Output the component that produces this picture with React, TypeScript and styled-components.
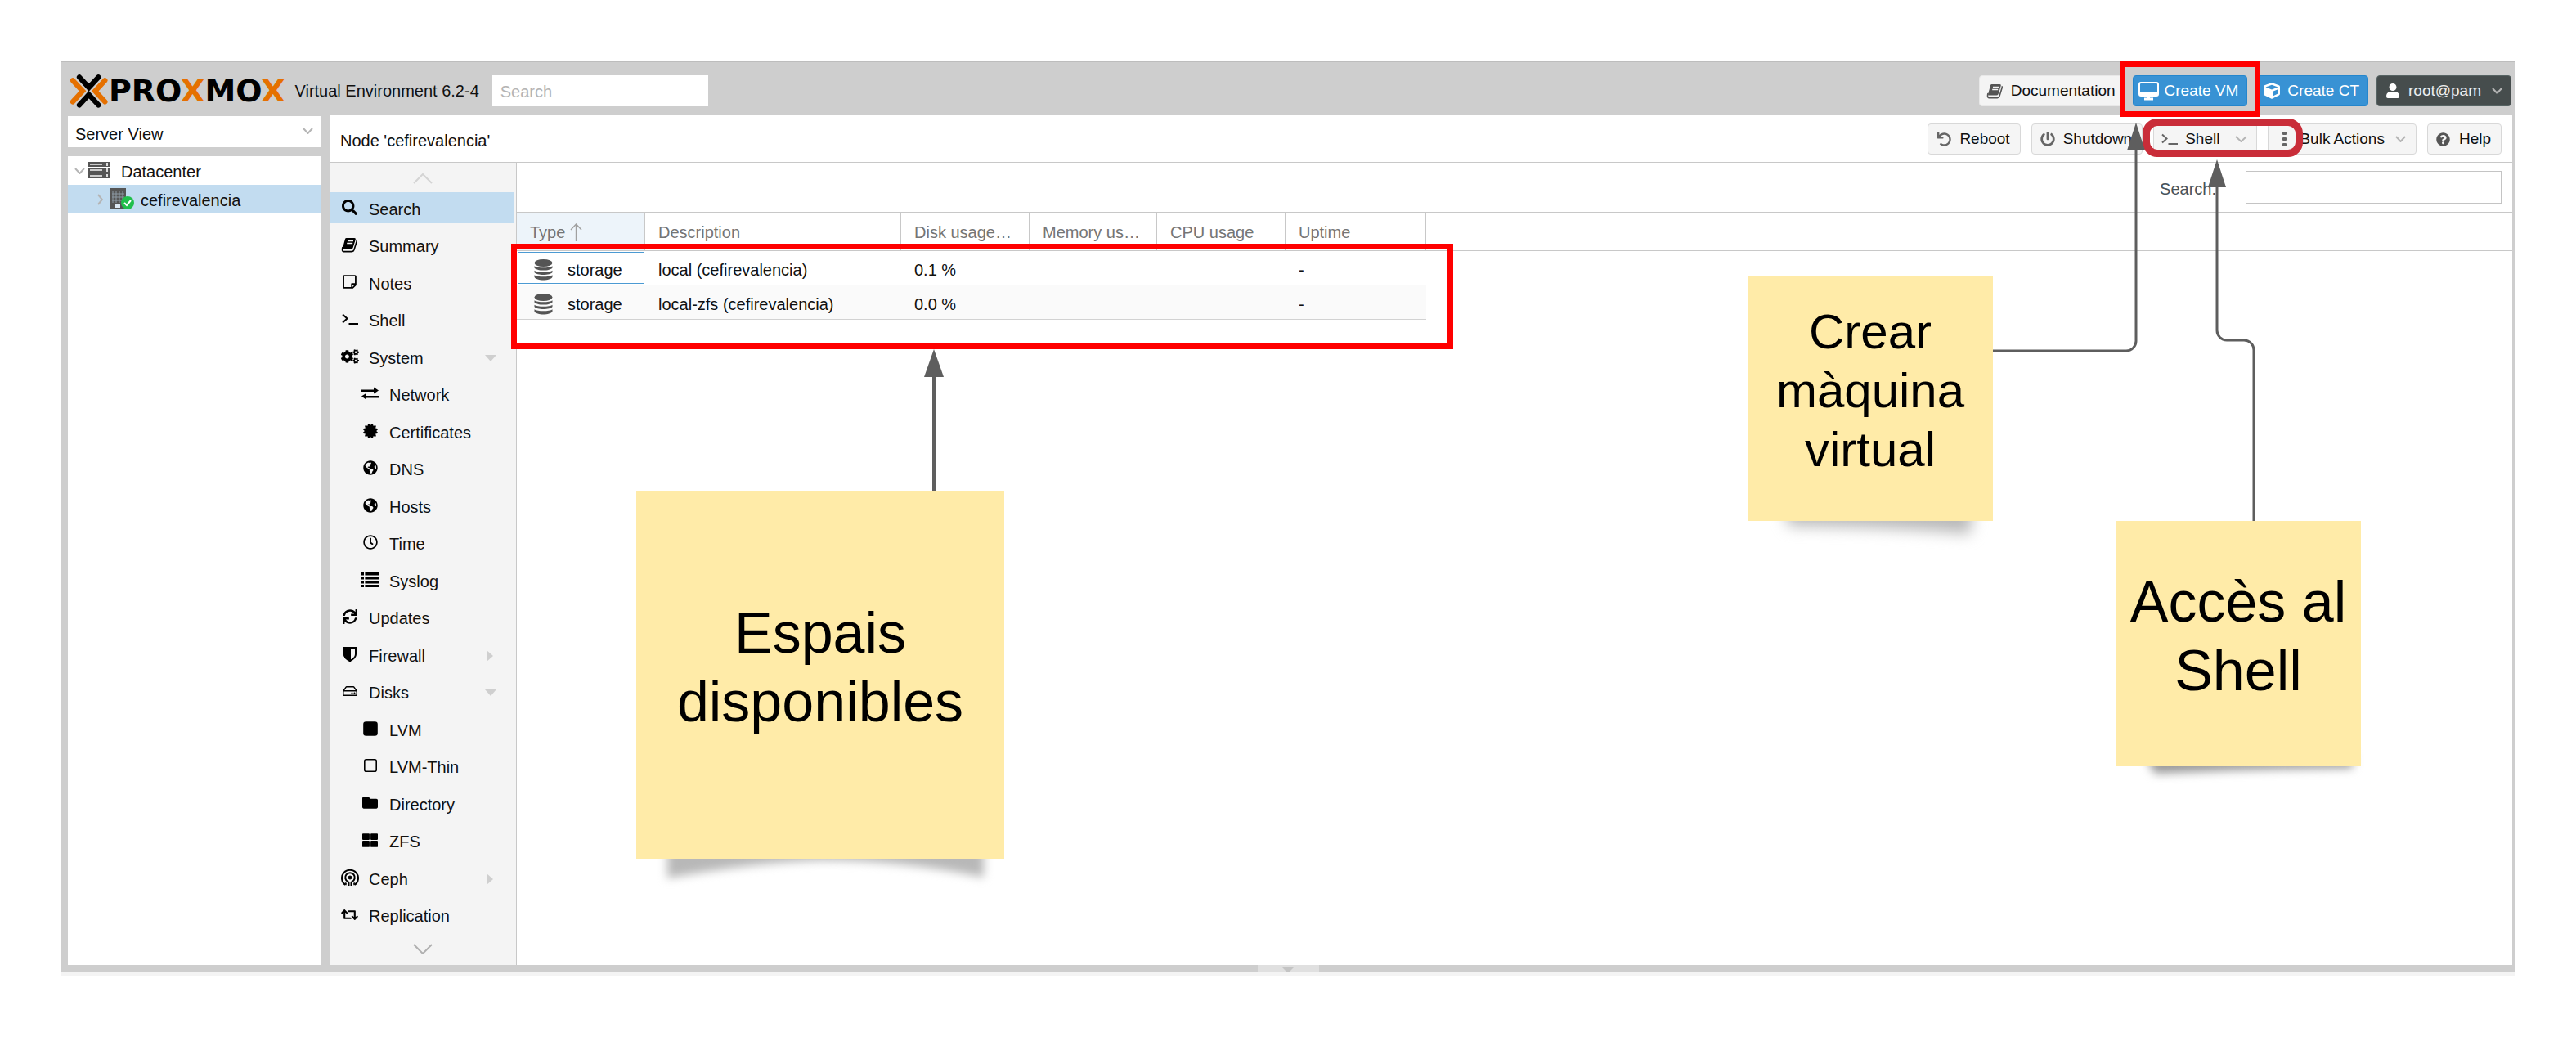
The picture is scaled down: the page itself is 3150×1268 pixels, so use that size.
import React from "react";
import styled, { createGlobalStyle, css } from "styled-components";
import {
  FaCertificate,
  FaCogs,
  FaCube,
  FaFolder,
  FaGlobeAmericas,
  FaPowerOff,
  FaQuestionCircle,
  FaRegClock,
  FaRegHdd,
  FaRegStickyNote,
  FaRetweet,
  FaSearch,
  FaSync,
  FaThLarge,
  FaUndo,
  FaUser,
} from "react-icons/fa";

const frame = "#cecece";
const line = "#c8c8c8";
const selected = "#c2dcf0";
const connector = "#5e5e5e";

const GlobalStyle = createGlobalStyle`
  *, *::before, *::after { box-sizing: border-box; }
  body {
    margin: 0;
    background: #fff;
    color: #111;
    font: 20px/24px "Liberation Sans", Arial, sans-serif;
  }
  button, input, select { font: inherit; color: inherit; margin: 0; }
  svg { display: block; flex: none; }
`;

/* ---------- frame ---------- */

const Page = styled.div`
  display: flex;
  min-height: 100vh;
  padding: 75px;
`;

const Shell = styled.div`
  position: relative;
  display: flex;
  flex: 1;
  flex-direction: column;
  min-width: 0;
  background: ${frame};
`;

const TopBar = styled.header`
  display: flex;
  align-items: center;
  height: 66px;
  padding: 4px 4px 0 9px;
  border-top: 1px solid #bdbdbd;
`;

const Logo = styled.a`
  display: flex;
  align-items: center;
  gap: 1px;
  color: #000;
  text-decoration: none;
`;

const Wordmark = styled.span`
  font: bold 38px/40px "DejaVu Sans", sans-serif;
`;

const Accent = styled.span`
  color: #e57000;
`;

const Version = styled.span`
  margin: 0 16px 0 12px;
`;

const GlobalSearch = styled.input`
  width: 264px;
  height: 38px;
  padding: 4px 10px 0;
  border: 0;
  background: #fff;
  &::placeholder { color: #b4b4b4; opacity: 1; }
`;

const TopActions = styled.div`
  display: flex;
  gap: 10px;
  margin-left: auto;
`;

const Workspace = styled.div`
  display: flex;
  flex: 1;
  gap: 10px;
  min-height: 0;
  padding: 0 3px 0 8px;
`;

const Splitter = styled.div`
  display: flex;
  justify-content: center;
  height: 8px;
`;

const SplitterHandle = styled.button`
  display: flex;
  justify-content: center;
  width: 75px;
  padding: 3px 0 0;
  border: 0;
  background: #e0e0e0;
`;

const StatusStrip = styled.div`
  height: 5px;
  background: #f4f4f4;
`;

/* ---------- buttons ---------- */

type Tone = "plain" | "tool" | "primary" | "dark";

const tones = {
  plain: css`background: #f4f4f4; border-color: #e8e8e8;`,
  tool: css`padding-right: 12px; background: #f5f5f5; border-color: #d8d8d8;`,
  primary: css`background: #3892d4; border-color: #2486cd; color: #fff;`,
  dark: css`background: #464d4d; border-color: #576464; color: #eee;`,
};

const Button = styled.button<{ $tone: Tone }>`
  display: flex;
  align-items: center;
  height: 38px;
  padding: 1px 10px 0 7px;
  border: 1px solid;
  border-radius: 4px;
  font-size: 19px;
  white-space: nowrap;
  ${(p) => tones[p.$tone]}
`;

const IconSlot = styled.span<{ $color?: string }>`
  display: flex;
  justify-content: center;
  width: 24px;
  margin-right: 7px;
  color: ${(p) => p.$color ?? "inherit"};
`;

const Caret = styled.span`
  display: flex;
  margin-left: 13px;
  color: #b5b5b5;
`;

const SplitButton = styled.div`
  display: flex;
  & > :first-child { padding-right: 10px; border-right-color: #d0d0d0; border-radius: 4px 0 0 4px; }
  & > :last-child { padding: 0 11px 0 8px; border-left: 0; border-radius: 0 4px 4px 0; color: #b5b5b5; }
`;

/* ---------- resource tree ---------- */

const Side = styled.aside`
  display: flex;
  flex-direction: column;
  gap: 11px;
  width: 310px;
  padding-top: 1px;
`;

const ViewPicker = styled.div`
  display: grid;
  align-items: center;
  height: 38px;
  background: #fff;
  color: #b5b5b5;
  & > * { grid-area: 1 / 1; }
  & > svg { justify-self: end; margin: 0 10px 2px 0; pointer-events: none; }
`;

const ViewSelect = styled.select`
  width: 100%;
  height: 100%;
  padding: 5px 9px 0;
  border: 0;
  appearance: none;
  background: transparent;
  color: #111;
`;

const Tree = styled.ul`
  flex: 1;
  margin: 0;
  padding: 0;
  background: #fff;
  list-style: none;
`;

const TreeRow = styled.li<{ $depth: number; $active?: boolean }>`
  display: flex;
  align-items: center;
  gap: ${(p) => (p.$depth ? 8 : 4)}px;
  height: 35px;
  padding-left: ${(p) => 8 + p.$depth * 28}px;
  background: ${(p) => (p.$active ? selected : "transparent")};
  color: #b5b5b5;
`;

const TreeLabel = styled.span<{ $indent?: boolean }>`
  padding: 3px 0 0 ${(p) => (p.$indent ? 10 : 0)}px;
  color: #111;
`;

/* ---------- node panel ---------- */

const Panel = styled.main`
  display: flex;
  flex: 1;
  flex-direction: column;
  min-width: 0;
  background: #fff;
`;

const PanelHead = styled.div`
  display: flex;
  align-items: center;
  gap: 13px;
  height: 58px;
  padding: 0 13px;
  border-bottom: 1px solid ${line};
`;

const PanelTitle = styled.h1`
  margin: 0 auto 0 0;
  padding-top: 4px;
  font-size: 20px;
  font-weight: normal;
`;

const PanelBody = styled.div`
  display: flex;
  flex: 1;
  min-height: 0;
`;

const Nav = styled.nav`
  display: flex;
  flex-direction: column;
  width: 229px;
  border-right: 1px solid ${line};
  background: #f4f4f4;
`;

const NavScroll = styled.button<{ $end?: boolean }>`
  display: flex;
  align-items: center;
  justify-content: center;
  height: ${(p) => (p.$end ? 39 : 32)}px;
  padding: ${(p) => (p.$end ? "0" : "7px 0 0")};
  border: 0;
  background: none;
  color: ${(p) => (p.$end ? "#b0b0b0" : "#d4d4d4")};
`;

const NavList = styled.ul`
  display: flex;
  flex: 1;
  flex-direction: column;
  margin: 0;
  padding: 0;
  list-style: none;
`;

const NavItem = styled.li`
  display: flex;
  flex: 1;
  align-items: center;
`;

const NavLink = styled.a<{ $depth: number; $active?: boolean }>`
  display: flex;
  align-items: center;
  width: 226px;
  height: 38px;
  padding: 0 21px 0 ${(p) => 12 + p.$depth * 25}px;
  background: ${(p) => (p.$active ? selected : "transparent")};
  color: #111;
  text-decoration: none;
`;

const NavLabel = styled.span`
  flex: 1;
  padding: 4px 0 0 11px;
`;

const NavIcon = styled.span`
  display: flex;
  justify-content: center;
  width: 25px;
  color: #000;
`;

const NavArrow = styled.span`
  display: flex;
  justify-content: center;
  width: 16px;
  padding-top: 4px;
  color: #cfcfcf;
`;

const Content = styled.section`
  flex: 1;
  min-width: 0;
`;

const FilterBar = styled.form`
  display: flex;
  align-items: center;
  justify-content: flex-end;
  gap: 36px;
  height: 61px;
  padding: 0 13px;
  border-bottom: 1px solid ${line};
`;

const FilterLabel = styled.label`
  padding-top: 4px;
  color: #47535b;
`;

const FilterInput = styled.input`
  width: 313px;
  height: 40px;
  padding: 0 10px;
  border: 1px solid #c4c4c4;
  background: #fff;
`;

/* ---------- resource grid ---------- */

const Grid = styled.table`
  width: 100%;
  border-collapse: separate;
  border-spacing: 0;
  table-layout: fixed;
`;

const Col = styled.col<{ $w?: number }>`
  width: ${(p) => (p.$w ? `${p.$w}px` : "auto")};
`;

const HeadCell = styled.th<{ $sorted?: boolean }>`
  height: 47px;
  padding: 2px 16px 0;
  overflow: hidden;
  border-right: 1px solid ${line};
  border-bottom: 1px solid ${line};
  background: ${(p) => (p.$sorted ? "#edf4fa" : "#fff")};
  color: #757575;
  font-weight: normal;
  text-align: left;
  white-space: nowrap;
  &:last-child { border-right: 0; }
`;

const HeadLabel = styled.span`
  display: flex;
  align-items: center;
  gap: 6px;
  & > svg { color: #a0a0a0; }
`;

const Cell = styled.td<{ $focus?: boolean; $stripe?: boolean }>`
  height: 42px;
  padding: 4px 16px 0;
  border-bottom: 1px solid #d2d2d2;
  background: ${(p) => (p.$stripe ? "#fafafa" : "#fff")};
  box-shadow: ${(p) => (p.$focus ? "inset 0 0 0 1px #fff, inset 0 0 0 2px #4b9ad3" : "none")};
  white-space: nowrap;
  &:last-child { border-bottom: 0; background: none; }
`;

const Kind = styled.span`
  display: flex;
  align-items: center;
  gap: 18px;
  padding-left: 5px;
  & > svg { color: #555; }
`;

/* ---------- annotations over the page ---------- */

const LeftNotes = styled.div`
  position: absolute;
  top: 0;
  left: 0;
  width: 1740px;
  height: 1118px;
  pointer-events: none;
`;

const RightNotes = styled(LeftNotes)`
  right: 0;
  left: auto;
  width: 975px;
`;

const Spot = styled.div<{ $x: number; $y: number; $w: number; $h: number }>`
  position: absolute;
  top: ${(p) => p.$y}px;
  left: ${(p) => p.$x}px;
  width: ${(p) => p.$w}px;
  height: ${(p) => p.$h}px;
`;

const RedFrame = styled(Spot)`
  border: 7px solid #f00;
`;

const Ring = styled(Spot)`
  border: 9px solid #c92d39;
  border-radius: 18px;
`;

const Sticky = styled(Spot)<{ $size: number; $lh: number }>`
  & > p {
    position: relative;
    display: flex;
    align-items: center;
    justify-content: center;
    height: 100%;
    margin: 0;
    padding-bottom: 18px;
    background: #ffeba8;
    color: #000;
    font-size: ${(p) => p.$size}px;
    line-height: ${(p) => p.$lh}px;
    text-align: center;
  }
`;

const Drawing = styled.svg`
  position: absolute;
  inset: 0;
  overflow: visible;
`;

/* ---------- icons ---------- */

const Mark = () => (
  <svg width="48" height="42" viewBox="-3 0 144 126" fill="none" strokeWidth="19" strokeLinecap="round" strokeLinejoin="miter">
    <path d="M12 25 L48 64 L12 103 M130 25 L94 64 L130 103" stroke="#e57000" />
    <path d="M36 13 L71 51 L106 13 M36 115 L71 77 L106 115" stroke="#000" />
  </svg>
);

const Chevron = ({ w = 13, h = 8, dir = "down" }: { w?: number; h?: number; dir?: "down" | "up" | "right" }) => {
  const d = { down: `M1 1 L${w / 2} ${h - 1} L${w - 1} 1`, up: `M1 ${h - 1} L${w / 2} 1 L${w - 1} ${h - 1}`, right: `M1 1 L${w - 1} ${h / 2} L1 ${h - 1}` };
  return (
    <svg width={w} height={h} fill="none" stroke="currentColor" strokeWidth="2">
      <path d={d[dir]} />
    </svg>
  );
};

const Terminal = ({ size = 20 }: { size?: number }) => (
  <svg width={size} height={size} viewBox="0 0 20 20" fill="none" stroke="currentColor" strokeWidth="2">
    <path d="M1 4.5 L6.5 9.5 L1 14.5 M8.5 16 H20" />
  </svg>
);

const Book = () => (
  <svg width="21" height="19" viewBox="0 0 21 19">
    <path d="M6.5 1 H16.5 Q18.3 1 17.8 2.8 L14.6 13 Q14 14.5 12.3 14.5 H3 Q1.6 14.5 2.2 12.6 L5 2.3 Q5.4 1 6.5 1 Z" fill="currentColor" />
    <path d="M8 4.5 H15 M7.2 7.5 H14.2" stroke="#f4f4f4" strokeWidth="1.3" />
    <path d="M2 12 Q.6 17.4 3 17.6 H13.4 Q15.3 17.6 16 15.6 L19.2 5 Q19.6 3.8 18.6 3.4" fill="none" stroke="currentColor" strokeWidth="1.6" />
  </svg>
);

const Desktop = () => (
  <svg width="25" height="24" viewBox="0 0 25 24" fill="none" stroke="currentColor">
    <rect x="1" y="2" width="23" height="16" rx="2" strokeWidth="2" />
    <path d="M1 16 H24" strokeWidth="4" />
    <path d="M12.5 18 V22 M7 22 H18" strokeWidth="3" />
  </svg>
);

const Exchange = () => (
  <svg width="21" height="16" viewBox="0 0 21 16" fill="currentColor">
    <path d="M0 3.5 H15 V0.5 L21 4.6 L15 8.5 V6 H0 Z M21 13.5 H6 V15.8 L0 11.6 L6 7.8 V11 H21 Z" />
  </svg>
);

const ThList = () => (
  <svg width="22" height="18" viewBox="0 0 22 18" fill="currentColor">
    {[0, 5, 10, 15].map((y) => (
      <path key={y} d={`M0 ${y} h3 v3.4 h-3 z M4.4 ${y} h17.6 v3.4 h-17.6 z`} />
    ))}
  </svg>
);

const HalfShield = () => (
  <svg width="16" height="18" viewBox="0 0 16 18" fill="none" stroke="currentColor" strokeWidth="2">
    <path d="M1 1 H15 V9 C15 13 11 15.5 8 17 C5 15.5 1 13 1 9 Z" />
    <path d="M1 1 H8 V17 C5 15.5 1 13 1 9 Z" fill="currentColor" />
  </svg>
);

const Square = ({ filled }: { filled?: boolean }) => (
  <svg width="18" height="18" viewBox="0 0 18 18" stroke="currentColor" strokeWidth="1.6">
    {filled ? <rect x="1" y="1" width="16" height="16" rx="2.5" fill="currentColor" /> : <rect x="1.8" y="1.8" width="14.4" height="14.4" rx="2" fill="none" />}
  </svg>
);

const Ceph = () => (
  <svg width="22" height="22" viewBox="0 0 22 22" fill="none" stroke="currentColor" strokeWidth="2">
    <circle cx="11" cy="11" r="2" fill="currentColor" strokeWidth="1" />
    <path d="M5.5 20 A10 10 0 1 1 16.5 20" />
    <path d="M9.5 21 V17.5 Q9.5 16.5 8.5 16.2 A5.8 5.8 0 1 1 13.5 16.2 Q12.5 16.5 12.5 17.5 V21" />
    <path d="M5.8 20 Q6.6 18.6 5.4 17.4 M16.2 20 Q15.4 18.6 16.6 17.4" strokeWidth="1.6" />
  </svg>
);

const Dots = () => (
  <svg width="5" height="18" viewBox="0 0 5 18" fill="currentColor">
    <rect width="5" height="4" rx="1" />
    <rect y="7" width="5" height="4" rx="1" />
    <rect y="14" width="5" height="4" rx="1" />
  </svg>
);

const Disks = () => (
  <svg width="23" height="26" viewBox="0 0 23 26" fill="currentColor">
    <ellipse cx="11.5" cy="4.5" rx="11" ry="4.5" />
    <path d="M.5 8.2 C4 11 19 11 22.5 8.2 V10.5 C20 14.6 3 14.6 .5 10.5 Z" />
    <path d="M.5 13.7 C4 16.5 19 16.5 22.5 13.7 V16 C20 20 3 20 .5 16 Z" />
    <path d="M.5 19.2 C4 22 19 22 22.5 19.2 V21.8 C20 26.8 3 26.8 .5 21.8 Z" />
  </svg>
);

const Racks = () => (
  <svg width="26" height="21" viewBox="0 0 26 21">
    {[0, 7, 14].map((y) => (
      <g key={y}>
        <rect y={y} width="26" height="6" fill="#555" />
        <rect x="2" y={y + 2} width="15" height="2" fill="#ccc" />
        <rect x="22" y={y + 1} width="2" height="4" fill="#ddd" />
      </g>
    ))}
  </svg>
);

const OnlineNode = () => (
  <svg width="30" height="27" viewBox="0 0 30 27">
    <rect width="20" height="25" fill="#555" />
    <path d="M4 3 V18 M8 3 V18 M12 3 V18 M16 3 V18 M3 7 H18 M3 11 H18 M3 15 H18" stroke="#8d9aa4" strokeWidth="1" />
    <rect x="7" y="20" width="6" height="4" fill="#dce8f2" />
    <circle cx="22" cy="18" r="8" fill="#21bf4b" />
    <path d="M18 18 L21 21 L26 15" fill="none" stroke="#fff" strokeWidth="2" />
  </svg>
);

const Triangle = ({ open }: { open: boolean }) =>
  open ? (
    <svg width="14" height="8" fill="currentColor"><path d="M0 0 H14 L7 8 Z" /></svg>
  ) : (
    <svg width="14" height="14" fill="currentColor"><path d="M2 0 L10 7 L2 14 Z" /></svg>
  );

const SortArrow = () => (
  <svg width="15" height="22" fill="none" stroke="currentColor" strokeWidth="1.4">
    <path d="M7.5 22 V1 M1 8 L7.5 1 L14 8" />
  </svg>
);

/* ---------- data ---------- */

type Entry = { label: string; icon: React.ReactNode; depth?: number; open?: boolean };

const entries: Entry[] = [
  { label: "Search", icon: <FaSearch size={19} /> },
  { label: "Summary", icon: <Book /> },
  { label: "Notes", icon: <FaRegStickyNote size={19} /> },
  { label: "Shell", icon: <Terminal /> },
  { label: "System", icon: <FaCogs size={22} />, open: true },
  { label: "Network", icon: <Exchange />, depth: 1 },
  { label: "Certificates", icon: <FaCertificate size={18} />, depth: 1 },
  { label: "DNS", icon: <FaGlobeAmericas size={18} />, depth: 1 },
  { label: "Hosts", icon: <FaGlobeAmericas size={18} />, depth: 1 },
  { label: "Time", icon: <FaRegClock size={18} />, depth: 1 },
  { label: "Syslog", icon: <ThList />, depth: 1 },
  { label: "Updates", icon: <FaSync size={18} /> },
  { label: "Firewall", icon: <HalfShield />, open: false },
  { label: "Disks", icon: <FaRegHdd size={18} />, open: true },
  { label: "LVM", icon: <Square filled />, depth: 1 },
  { label: "LVM-Thin", icon: <Square />, depth: 1 },
  { label: "Directory", icon: <FaFolder size={19} />, depth: 1 },
  { label: "ZFS", icon: <FaThLarge size={19} />, depth: 1 },
  { label: "Ceph", icon: <Ceph />, open: false },
  { label: "Replication", icon: <FaRetweet size={21} /> },
];

const columns = [
  { title: "Type", width: 157 },
  { title: "Description", width: 313 },
  { title: "Disk usage…", width: 157 },
  { title: "Memory us…", width: 156 },
  { title: "CPU usage", width: 157 },
  { title: "Uptime", width: 172 },
];

const rows = [
  ["local (cefirevalencia)", "0.1 %", "", "", "-"],
  ["local-zfs (cefirevalencia)", "0.0 %", "", "", "-"],
];

const Shade = styled.path<{ $blur: number }>`
  filter: blur(${(p) => p.$blur}px);
`;

const Shadow = ({ d, fill, blur }: { d: string; fill: string; blur: number }) => (
  <Drawing width="100%" height="100%">
    <Shade d={d} fill={fill} $blur={blur} />
  </Drawing>
);

export default function App() {
  return (
    <Page>
      <GlobalStyle />
      <Shell>
        <TopBar>
          <Logo href="#" aria-label="Proxmox">
            <Mark />
            <Wordmark>PRO<Accent>X</Accent>MO<Accent>X</Accent></Wordmark>
          </Logo>
          <Version>Virtual Environment 6.2-4</Version>
          <GlobalSearch type="search" placeholder="Search" aria-label="Search" />
          <TopActions>
            <Button $tone="plain"><IconSlot $color="#555"><Book /></IconSlot>Documentation</Button>
            <Button $tone="primary"><IconSlot><Desktop /></IconSlot>Create VM</Button>
            <Button $tone="primary"><IconSlot><FaCube size={20} /></IconSlot>Create CT</Button>
            <Button $tone="dark">
              <IconSlot $color="#fff"><FaUser size={18} /></IconSlot>root@pam<Caret><Chevron /></Caret>
            </Button>
          </TopActions>
        </TopBar>

        <Workspace>
          <Side>
            <ViewPicker>
              <ViewSelect aria-label="View" defaultValue="server">
                <option value="server">Server View</option>
              </ViewSelect>
              <Chevron />
            </ViewPicker>
            <Tree>
              <TreeRow $depth={0}><Chevron /><Racks /><TreeLabel $indent>Datacenter</TreeLabel></TreeRow>
              <TreeRow $depth={1} $active><Chevron w={7} h={14} dir="right" /><OnlineNode /><TreeLabel>cefirevalencia</TreeLabel></TreeRow>
            </Tree>
          </Side>

          <Panel>
            <PanelHead>
              <PanelTitle>Node 'cefirevalencia'</PanelTitle>
              <Button $tone="tool"><IconSlot $color="#666"><FaUndo size={17} /></IconSlot>Reboot</Button>
              <Button $tone="tool"><IconSlot $color="#666"><FaPowerOff size={18} /></IconSlot>Shutdown</Button>
              <SplitButton>
                <Button $tone="tool"><IconSlot $color="#666"><Terminal /></IconSlot>Shell</Button>
                <Button $tone="tool" aria-label="Shell options"><Chevron w={15} /></Button>
              </SplitButton>
              <Button $tone="tool"><IconSlot $color="#666"><Dots /></IconSlot>Bulk Actions<Caret><Chevron /></Caret></Button>
              <Button $tone="tool"><IconSlot $color="#555"><FaQuestionCircle size={17} /></IconSlot>Help</Button>
            </PanelHead>
            <PanelBody>
              <Nav>
                <NavScroll aria-label="Scroll up"><Chevron w={24} h={13} dir="up" /></NavScroll>
                <NavList>
                  {entries.map((e, i) => (
                    <NavItem key={e.label}>
                      <NavLink href="#" $depth={e.depth ?? 0} $active={i === 0}>
                        <NavIcon>{e.icon}</NavIcon>
                        <NavLabel>{e.label}</NavLabel>
                        {e.open !== undefined && <NavArrow><Triangle open={e.open} /></NavArrow>}
                      </NavLink>
                    </NavItem>
                  ))}
                </NavList>
                <NavScroll $end aria-label="Scroll down"><Chevron w={24} h={13} /></NavScroll>
              </Nav>
              <Content>
                <FilterBar>
                  <FilterLabel htmlFor="filter">Search:</FilterLabel>
                  <FilterInput id="filter" type="text" />
                </FilterBar>
                <Grid>
                  <colgroup>
                    {columns.map((c) => <Col key={c.title} $w={c.width} />)}
                    <Col />
                  </colgroup>
                  <thead>
                    <tr>
                      {columns.map((c, i) => (
                        <HeadCell key={c.title} $sorted={i === 0}>
                          <HeadLabel>{c.title}{i === 0 && <SortArrow />}</HeadLabel>
                        </HeadCell>
                      ))}
                      <HeadCell />
                    </tr>
                  </thead>
                  <tbody>
                    {rows.map((r, i) => (
                      <tr key={r[0]}>
                        <Cell $focus={i === 0} $stripe={i === 1}><Kind><Disks />storage</Kind></Cell>
                        {r.map((v, j) => <Cell key={j} $stripe={i === 1}>{v}</Cell>)}
                        <Cell />
                      </tr>
                    ))}
                  </tbody>
                </Grid>
              </Content>
            </PanelBody>
          </Panel>
        </Workspace>

        <Splitter>
          <SplitterHandle aria-label="Collapse log">
            <svg width="14" height="5" fill="#c4c4c4"><path d="M0 0 H14 L9 5 H5 Z" /></svg>
          </SplitterHandle>
        </Splitter>
        <StatusStrip />

        <LeftNotes>
          <RedFrame $x={550} $y={223} $w={1152} $h={129} />
          <Drawing width="100%" height="100%" fill={connector}>
            <path d="M1067 352 L1079 386 H1055 Z M1065 386 H1069 V525 H1065 Z" />
          </Drawing>
          <Sticky $x={703} $y={525} $w={450} $h={450} $size={70} $lh={84}>
            <Shadow d="M38 430 H425 V473 Q330 452 225 452 Q140 455 38 474 Z" fill="#b8b8b8" blur={6} />
            <p>Espais<br />disponibles</p>
          </Sticky>
        </LeftNotes>

        <RightNotes>
          <RedFrame $x={492} $y={0} $w={172} $h={68} />
          <Ring $x={520} $y={70} $w={196} $h={47} />
          <Drawing width="100%" height="100%" fill="none" stroke={connector} strokeWidth="3">
            <path d="M337 354 H500 A12 12 0 0 0 512 342 V108" />
            <path d="M611 153 V329 A12 12 0 0 0 623 341 H644 A12 12 0 0 1 656 353 V562" />
            <path d="M512 75 L523 109 H501 Z M611 120 L622 154 H600 Z" fill={connector} stroke="none" />
          </Drawing>
          <Sticky $x={37} $y={262} $w={300} $h={300} $size={60} $lh={72}>
            <Shadow d="M45 280 H276 L272 316 Q200 308 50 306 Z" fill="#b8b8b8" blur={9} />
            <p>Crear<br />màquina<br />virtual</p>
          </Sticky>
          <Sticky $x={487} $y={562} $w={300} $h={300} $size={70} $lh={84}>
            <Shadow d="M35 285 H290 V302 Q170 303 48 309 Z" fill="#999" blur={6} />
            <p>Accès al<br />Shell</p>
          </Sticky>
        </RightNotes>
      </Shell>
    </Page>
  );
}
